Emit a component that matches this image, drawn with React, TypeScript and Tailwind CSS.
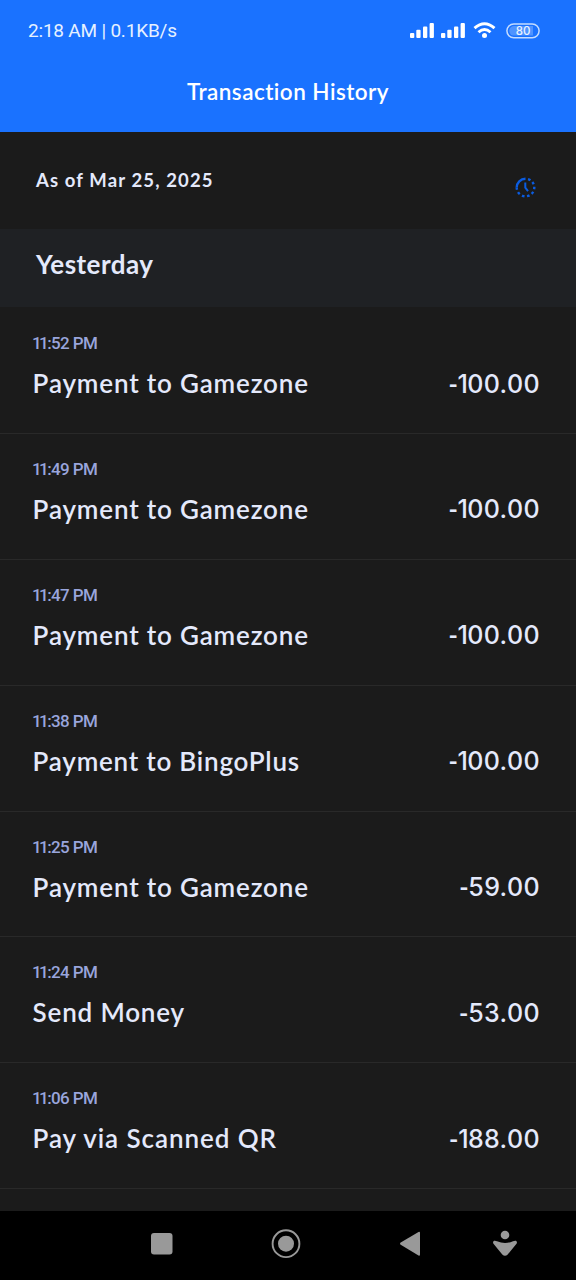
type Item = { rest: string; title: string; titleClass: string; amount: string; one: boolean };

const items: Item[] = [
  { rest: ':52 PM', title: 'Payment to Gamezone', titleClass: 'tracking-[0.83px]', amount: '00.00', one: true },
  { rest: ':49 PM', title: 'Payment to Gamezone', titleClass: 'tracking-[0.83px]', amount: '00.00', one: true },
  { rest: ':47 PM', title: 'Payment to Gamezone', titleClass: 'tracking-[0.83px]', amount: '00.00', one: true },
  { rest: ':38 PM', title: 'Payment to BingoPlus', titleClass: 'tracking-[0.77px]', amount: '00.00', one: true },
  { rest: ':25 PM', title: 'Payment to Gamezone', titleClass: 'tracking-[0.83px]', amount: '59.00', one: false },
  { rest: ':24 PM', title: 'Send Money', titleClass: 'tracking-[0.83px]', amount: '53.00', one: false },
  { rest: ':06 PM', title: 'Pay via Scanned QR', titleClass: 'tracking-[0.92px]', amount: '88.00', one: true },
];

function Signal() {
  return (
    <svg width="24" height="16" viewBox="0 0 24 16" fill="#fff">
      <rect x="0" y="10" width="4.3" height="5" rx="1" />
      <rect x="6.3" y="6.8" width="4.3" height="8.2" rx="1" />
      <rect x="13" y="3.5" width="4.3" height="11.5" rx="1" />
      <rect x="19.6" y="0" width="4.3" height="15" rx="1" />
    </svg>
  );
}

function Row({ item }: { item: Item }) {
  return (
    <li className="h-[125.9px] border-b border-[#292929] pl-8 pr-9 pt-6">
      <div className="h-[23px] font-['Roboto',sans-serif] text-[17px] font-medium leading-[23px] tracking-[-0.6px] text-[#99a5dc]">
        <span className="tracking-[-2.6px]">11</span>
        <span className="ml-[1px]">{item.rest}</span>
      </div>
      <div className="mt-[10px] flex h-9 items-center justify-between text-[#e4e9fb]">
        <span className={`ml-[0.6px] font-['Lato',sans-serif] text-[26px] font-semibold leading-9 ${item.titleClass}`}>{item.title}</span>
        <span className="font-['Inter',sans-serif] text-[25px] font-medium leading-9 tracking-[0.4px]">
          <span className="font-['Lato',sans-serif] font-bold tracking-[-0.2px]">-</span>
          {item.one && <span className="tracking-[-0.7px]">1</span>}
          {item.amount}
        </span>
      </div>
    </li>
  );
}

export default function App() {
  return (
    <div className="flex h-[1280px] w-[576px] flex-col overflow-hidden bg-[#1b1b1b] font-['Lato',sans-serif]">
      <header className="h-[132px] shrink-0 bg-[#1a72ff] text-white">
        <div className="flex h-[61px] items-center justify-between pl-7 pr-9">
          <span className="pt-px font-['Roboto',sans-serif] text-[19px] tracking-[-0.2px] text-[#e6f1ff]">2:18 AM | 0.1KB/s</span>
          <div className="flex items-center">
            <Signal />
            <span className="w-[7px]" />
            <Signal />
            <svg className="ml-2" width="23" height="17" viewBox="0 0 23 17" fill="none" stroke="#fff" strokeWidth="2.9">
              <path d="M1.5 6.2Q11.5-2.8 21.5 6.2M5.5 10.3Q11.5 4.8 17.5 10.3" />
              <circle cx="11.5" cy="13.6" r="2.5" fill="#fff" stroke="none" />
            </svg>
            <svg className="ml-2.5" width="34" height="16" viewBox="0 0 34 16">
              <rect x="0.9" y="0.9" width="32.2" height="13.8" rx="6.9" fill="none" stroke="#c4dcff" strokeWidth="1.5" />
              <path d="M8 3H27V12.6H8A4.8 4.8 0 0 1 8 3Z" fill="#4f94ff" />
              <text x="17" y="11.8" textAnchor="middle" fontFamily="Inter" fontSize="11.5" fontWeight="500" fill="#eaf3ff">80</text>
            </svg>
          </div>
        </div>
        <h1 className="text-center text-[22.5px] font-semibold leading-[62px] tracking-[0.46px]">Transaction History</h1>
      </header>

      <main className="grow">
        <div className="flex h-[97px] items-start justify-between pl-9 pr-10">
          <span className="mt-[36px] text-[18.5px] font-bold leading-6 tracking-[1.12px] text-[#e4e9fb]">As of Mar 25, 2025</span>
          <svg className="mt-[45px]" width="21" height="21" viewBox="0 0 21 21" fill="none" stroke="#0b5ce0" strokeWidth="2.4">
            <path d="M1.7 10.5A8.8 8.8 0 0 1 10.5 1.7" />
            <path d="M10.5 1.7A8.8 8.8 0 1 1 1.7 10.5" strokeDasharray="2.6 2.58" strokeDashoffset="-2.6" />
            <path d="M10.3 5.5V10.7L13 14.2" strokeWidth="2" />
          </svg>
        </div>
        <h2 className="h-[78px] bg-[#1f2124] pl-9 text-[26px] font-bold leading-[70px] tracking-[0.45px] text-[#e4e9fb]">Yesterday</h2>
        <ul className="pt-px">
          {items.map((item, i) => (
            <Row key={i} item={item} />
          ))}
        </ul>
      </main>

      <nav className="h-[69px] shrink-0 bg-black">
        <svg width="576" height="69" viewBox="0 0 576 69" fill="#999">
          <rect x="151" y="22" width="21.5" height="21.5" rx="3" />
          <circle cx="286" cy="32.7" r="13.4" fill="none" stroke="#999" strokeWidth="1.9" />
          <circle cx="286" cy="32.7" r="8" />
          <path d="M400.3 31.7Q399.7 32.6 400.3 33.5L418.5 44.6Q420 45 420 43.5V21.9Q420 20.4 418.5 20.9Z" />
          <circle cx="505" cy="24" r="4.3" />
          <path d="M493.3 32.5C492.3 30 494.3 29 497 30.2Q505 33.8 513 30.2C515.7 29 517.7 30 516.7 32.5Q515.5 34 507.7 43.5Q505 46.2 502.3 43.5Q494.5 34 493.3 32.5Z" />
        </svg>
      </nav>
    </div>
  );
}
